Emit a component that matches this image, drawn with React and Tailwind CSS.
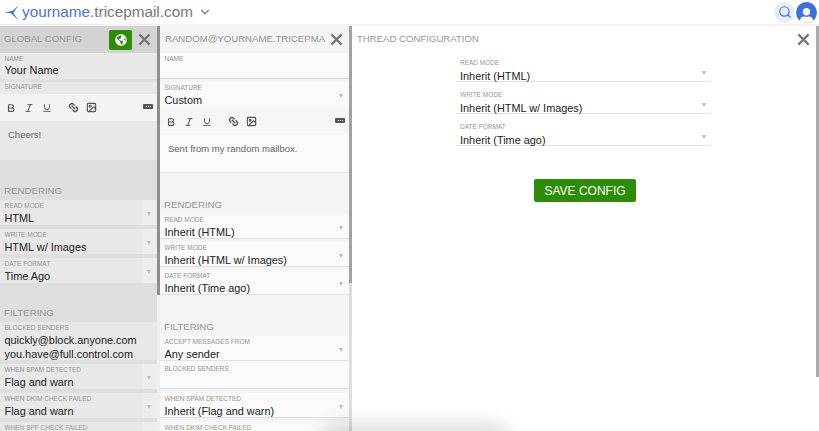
import { Search, ChevronDown, Bold, Italic, Underline, Link2, Image } from 'lucide-react'
import { FaGlobeAmericas, FaUser } from 'react-icons/fa'

function CloseIcon({ className = '' }) {
  return (
    <svg viewBox="0 0 14 14" className={`h-[13px] w-[13px] shrink-0 text-[#777] ${className}`}>
      <path d="M1.5 1.5 12.5 12.5M12.5 1.5 1.5 12.5" stroke="currentColor" strokeWidth="2.4" fill="none" />
    </svg>
  )
}

function Caret() {
  return <span className="absolute right-[6px] top-[12px] h-0 w-0 border-x-[2px] border-t-[4px] border-x-transparent border-t-[#bbb]" />
}

function Field({ label, value, select, strip, tint = 'bg-[#e8e8e8]', line = '', h = 'h-[25px]', mt = '', pt = 'pt-[0.5px]', valueMt = 'mt-[1.5px]', multi }) {
  return (
    <div className={`relative shrink-0 ${h} ${tint} ${line} ${mt} ${pt} overflow-hidden pl-[4.5px]`}>
      {strip && <span className="absolute inset-y-0 right-0 w-[14px] bg-[#ededed]" />}
      <div className="relative text-[6.5px] leading-[9px] text-[#959595] uppercase">{label}</div>
      {multi ? (
        <div className="mt-[1.5px] text-[10.9px] leading-[14px] text-[#222]">
          {multi.map((m) => <div key={m}>{m}</div>)}
        </div>
      ) : (
        <div className={`relative ${valueMt} text-[10.9px] leading-[15px] text-[#222]`}>{value}</div>
      )}
      {select && <Caret />}
    </div>
  )
}

function Toolbar({ bg }) {
  return (
    <div className={`flex h-[27px] shrink-0 items-center pl-[6px] pr-[4px] text-[#555] ${bg}`}>
      <Bold size={10} strokeWidth={2.6} />
      <Italic size={10} strokeWidth={2.4} className="ml-[8px]" />
      <Underline size={10} strokeWidth={2.2} className="ml-[8px]" />
      <Link2 size={11} strokeWidth={3} className="ml-[16px] rotate-45" />
      <Image size={11} strokeWidth={2.5} className="ml-[7px]" />
      <span className="ml-auto -mt-[3px] flex h-[5px] w-[10px] items-center justify-center gap-px rounded-[1px] bg-[#555]">
        <i className="h-px w-px bg-white" />
        <i className="h-px w-px bg-white" />
        <i className="h-px w-px bg-white" />
      </span>
    </div>
  )
}

function SectionTitle({ children, h }) {
  return (
    <div className={`flex shrink-0 items-end pl-[4px] pb-[3px] text-[9.7px] leading-[13px] text-[#959595] ${h}`}>
      {children}
    </div>
  )
}

function Scrollbar({ thumb, track = 'bg-[#e4e4e4]', color = 'bg-[#8e8e8e]' }) {
  return (
    <div className={`w-[3px] shrink-0 ${track}`}>
      <div className={`${thumb} w-full ${color}`} />
    </div>
  )
}

function GlobalConfig() {
  return (
    <div className="flex w-[157px] shrink-0 flex-col bg-[#dedede]">
      <div className="flex h-[27px] shrink-0 items-center bg-[#d3d3d3] pl-[4px]">
        <span className="text-[9.6px] text-[#959595]">GLOBAL CONFIG</span>
        <button className="ml-auto flex h-[20px] w-[23px] items-center justify-center rounded-[2px] bg-[#2b8e06]">
          <FaGlobeAmericas size={12} className="text-white" />
        </button>
        <CloseIcon className="ml-[6px] mr-[6px]" />
      </div>
      <Field label="Name" value="Your Name" h="h-[26px]" valueMt="mt-0" />
      <div className="h-[3px] shrink-0" />
      <div className="h-[12px] shrink-0 bg-[#e8e8e8] pl-[4.5px] text-[6.5px] leading-[10px] text-[#959595]">SIGNATURE</div>
      <Toolbar bg="bg-[#f3f3f3]" />
      <div className="h-[39px] shrink-0 bg-[#e8e8e8] pl-[8px] pt-[8px] text-[9.5px] leading-[12px] text-[#666]">Cheers!</div>
      <SectionTitle h="h-[40px]">RENDERING</SectionTitle>
      <Field label="Read Mode" value="HTML" select strip />
      <Field label="Write Mode" value="HTML w/ Images" select strip mt="mt-[4px]" />
      <Field label="Date Format" value="Time Ago" select strip mt="mt-[4px]" />
      <SectionTitle h="h-[39px]">FILTERING</SectionTitle>
      <Field label="Blocked Senders" multi={['quickly@block.anyone.com', 'you.have@full.control.com']} h="h-[38px]" />
      <Field label="When Spam Detected" value="Flag and warn" select strip mt="mt-[4px]" />
      <Field label="When DKIM Check Failed" value="Flag and warn" select strip mt="mt-[4px]" />
      <Field label="When SPF Check Failed" select strip mt="mt-[4px]" />
    </div>
  )
}

function MailboxConfig() {
  const white = 'bg-[#fafafa]'
  const line = 'border-b border-[#dfdfee]'
  return (
    <div className="flex w-[189px] shrink-0 flex-col bg-[#f4f4f4]">
      <div className="flex h-[27px] shrink-0 items-center pl-[5px]">
        <span className="whitespace-nowrap text-[9.6px] text-[#959595]">RANDOM@YOURNAME.TRICEPMA</span>
        <CloseIcon className="ml-auto mr-[6px]" />
      </div>
      <Field label="Name" tint={white} line="border-b border-[#dcdcdc]" h="h-[26px]" />
      <Field label="Signature" value="Custom" select tint={white} h="h-[26px]" mt="mt-[3px]" />
      <Toolbar bg="bg-[#f6f6f6]" />
      <div className="h-[38px] shrink-0 border-b border-[#e6e6ee] bg-[#fafafa] pl-[8px] pt-[8px] text-[9.5px] leading-[12px] text-[#666]">Sent from my random mailbox.</div>
      <SectionTitle h="h-[41px]">RENDERING</SectionTitle>
      <Field label="Read Mode" value="Inherit (HTML)" select tint={white} line={line} />
      <Field label="Write Mode" value="Inherit (HTML w/ Images)" select tint={white} line={line} mt="mt-[3px]" />
      <Field label="Date Format" value="Inherit (Time ago)" select tint={white} line={line} mt="mt-[3px]" />
      <SectionTitle h="h-[41px]">FILTERING</SectionTitle>
      <Field label="Accept Messages From" value="Any sender" select tint={white} line={line} />
      <Field label="Blocked Senders" tint={white} line={line} h="h-[28px]" pt="pt-[3px]" />
      <Field label="When Spam Detected" value="Inherit (Flag and warn)" select tint={white} line={line} mt="mt-[4px]" />
      <Field label="When DKIM Check Failed" tint={white} select mt="mt-[4px]" />
    </div>
  )
}

function ThreadField({ label, value }) {
  return (
    <div className="relative h-[32px] border-b border-[#dfdfee] pl-[4px] pt-[8px]">
      <div className="text-[6.5px] leading-[9px] text-[#959595] uppercase">{label}</div>
      <div className="mt-[2px] text-[10.9px] leading-[15px] text-[#222]">{value}</div>
      <span className="absolute right-[5px] top-[21px] h-0 w-0 border-x-[2px] border-t-[4px] border-x-transparent border-t-[#bbb]" />
    </div>
  )
}

function ThreadConfig() {
  return (
    <div className="relative flex min-w-0 flex-1 flex-col bg-white">
      <div className="flex h-[27px] shrink-0 items-center pl-[5px]">
        <span className="text-[9.6px] text-[#959595]">THREAD CONFIGURATION</span>
        <CloseIcon className="ml-auto mr-[6px]" />
      </div>
      <div className="ml-[104px] -mt-[3px] w-[255px] shrink-0">
        <ThreadField label="Read Mode" value="Inherit (HTML)" />
        <ThreadField label="Write Mode" value="Inherit (HTML w/ Images)" />
        <ThreadField label="Date Format" value="Inherit (Time ago)" />
      </div>
      <button className="ml-[182px] mt-[33px] flex h-[23px] w-[102px] shrink-0 items-center justify-center rounded-[2px] bg-[#2b8e06] text-[12px] text-white">
        SAVE CONFIG
      </button>
    </div>
  )
}

export default function App() {
  return (
    <div className="relative flex h-[431px] w-[819px] flex-col overflow-hidden bg-white font-['Liberation_Sans',Arial,sans-serif]">
      <header className="flex h-[26px] shrink-0 items-center border-b-2 border-[#f2f2f2] pl-[4px]">
        <svg viewBox="0 0 16 17" className="h-[17px] w-[15px] text-[#4a74d9]">
          <path d="M15.5 .8 9.6 6.4 .3 8.7l6.8.2 7.9 7.6-5-7.6z" fill="currentColor" />
        </svg>
        <span className="ml-[3px] text-[15.3px] leading-[20px] text-[#4a74d9]">yourname</span>
        <span className="text-[15.3px] leading-[20px] text-[#777]">.tricepmail.com</span>
        <ChevronDown size={14} strokeWidth={2.5} className="ml-[5px] text-[#888]" />
        <div className="ml-auto flex h-[21px] w-[21px] items-center justify-center rounded-full bg-[#e9eefb]">
          <Search size={14} strokeWidth={2} className="text-[#4a74d9]" />
        </div>
        <div className="ml-[1px] mr-[2px] flex h-[21px] w-[21px] items-end justify-center overflow-hidden rounded-full bg-[#3f6fdc]">
          <FaUser size={15} className="text-white" />
        </div>
      </header>
      <div className="flex min-h-0 flex-1">
        <GlobalConfig />
        <Scrollbar thumb="h-[269px]" track="bg-[#eeeeee]" />
        <MailboxConfig />
        <Scrollbar thumb="h-[257px]" track="bg-[#dddddd]" color="bg-[#a0a0a0]" />
        <ThreadConfig />
        <Scrollbar thumb="h-[351px]" track="bg-white" color="bg-[#aaaaaa]" />
      </div>
      <div className="absolute bottom-[-16px] left-[330px] h-[14px] w-[170px] rounded-full shadow-[0_0_18px_10px_rgba(0,0,0,0.13)]" />
    </div>
  )
}
